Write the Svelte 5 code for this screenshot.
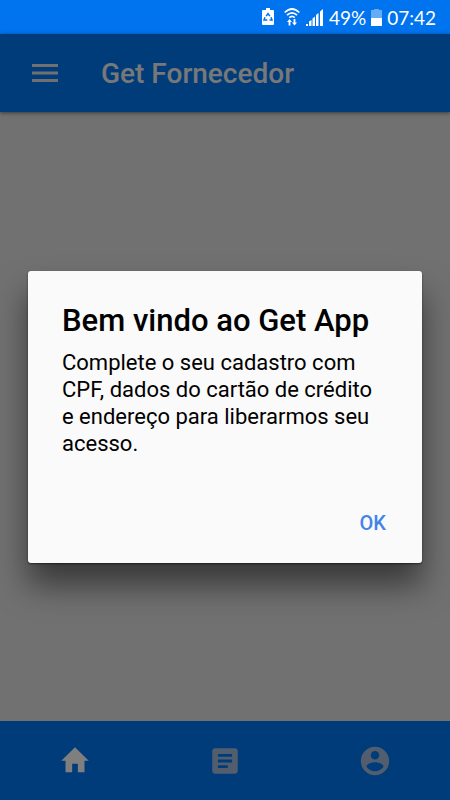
<script>
    let open = $state(true);

    const title = 'Get Fornecedor';

    const tabs = [
        { name: 'Início', active: true, path: 'M10 20v-6h4v6h4.700v-8.200h3L12 2.300 2.300 11.800h3V20z' },
        {
            name: 'Pedidos',
            active: false,
            path: 'M19 3H5c-1.100 0-2 .9-2 2v14c0 1.100.9 2 2 2h14c1.100 0 2-.9 2-2V5c0-1.100-.9-2-2-2zm-5 14H7v-2h7v2zm3-4H7v-2h10v2zm0-4H7V7h10v2z'
        },
        {
            name: 'Conta',
            active: false,
            path: 'M12 2C6.480 2 2 6.480 2 12s4.480 10 10 10 10-4.480 10-10S17.520 2 12 2zm0 3c1.660 0 3 1.340 3 3s-1.340 3-3 3-3-1.340-3-3 1.340-3 3-3zm0 14.200c-2.500 0-4.710-1.280-6-3.220.03-1.990 4-3.080 6-3.080 1.990 0 5.970 1.090 6 3.080-1.290 1.940-3.500 3.220-6 3.220z'
        }
    ];
</script>

<div class="screen">
    <div class="status">
        <svg class="saver" viewBox="0 0 12 18">
            <path fill="#fff" d="M4 0h4v2h3q1 0 1 1v13q0 1-1 1H1q-1 0-1-1V3q0-1 1-1h3z" />
            <path fill="none" stroke="#0073ef" stroke-width="1.500" d="M4.200 8.200 6 5.500l1.800 2.700M9 9.300l1 2.700H7.500M5.300 12H2l1-2.700" />
        </svg>
        <svg class="wifi" viewBox="0 0 16 18">
            <g fill="none" stroke="#fff" stroke-width="1.700">
                <path d="M.7 4.500Q8-2.500 15.300 4.500M3 7.200Q8 2.400 13 7.200M5.300 9.700Q8 7.200 10.700 9.700" />
            </g>
            <path fill="#fff" d="M5.500 11 8 14H6.400v3.500H4.600V14H3zM10.500 17.500 8 14.500h1.600V11h1.800v3.500H13z" />
        </svg>
        <svg class="signal" viewBox="0 0 17 17">
            <path fill="#fff" d="M0 15h2v2H0zM3 12.500 5.500 11v6H3zM6.500 9.500 9 7.500V17H6.500zM10 6l2.500-2v13H10zM14 2.500 17 0v17h-3z" />
        </svg>
        <span class="percent">49%</span>
        <svg class="battery" viewBox="0 0 11 17">
            <path fill="#66abf6" d="M3 0h5v1h3v8H0V1h3z" />
            <path fill="#fff" d="M0 9h11v8H0z" />
        </svg>
        <span>07:42</span>
    </div>

    <header>
        <button class="menu" aria-label="Menu">
            <svg viewBox="0 0 26 18">
                <path fill="currentColor" d="M0 0h26v3H0zM0 7.500h26v3H0zM0 15h26v3H0z" />
            </svg>
        </button>
        <h1>{title}</h1>
    </header>

    <main></main>

    <nav>
        {#each tabs as tab (tab.name)}
            <button class="tab" class:active={tab.active} aria-label={tab.name}>
                <svg viewBox="0 0 24 24">
                    <path fill="currentColor" d={tab.path} />
                </svg>
            </button>
        {/each}
    </nav>

    {#if open}
        <div class="overlay">
            <div class="dialog" role="dialog" aria-modal="true" aria-labelledby="dialog-title">
                <h2 id="dialog-title">Bem vindo ao Get App</h2>
                <p>Complete o seu cadastro com CPF, dados do cartão de crédito e endereço para liberarmos seu acesso.</p>
                <button class="ok" onclick={() => (open = false)}>OK</button>
            </div>
        </div>
    {/if}
</div>

<style>
    :global(body) {
        margin: 0;
        font-family: Roboto, sans-serif;
    }

    .screen {
        position: relative;
        display: flex;
        flex-direction: column;
        min-height: 100vh;
        background: #e2e2e2;
    }

    button {
        padding: 0;
        border: 0;
        background: none;
        font-family: inherit;
        cursor: pointer;
    }

    svg {
        display: block;
    }

    .status {
        display: flex;
        align-items: center;
        justify-content: flex-end;
        height: 34px;
        padding-right: 14px;
        background: #0073ef;
        color: #fff;
        font-family: Lato, sans-serif;
        font-size: 19px;
    }

    .saver {
        width: 12px;
        height: 18px;
        margin-right: 10px;
    }

    .wifi {
        width: 16px;
        height: 18px;
        margin-right: 6px;
    }

    .signal {
        width: 17px;
        height: 17px;
        margin-right: 6px;
    }

    .percent {
        margin-right: 5px;
    }

    .battery {
        width: 11px;
        height: 17px;
        margin-right: 5px;
    }

    header {
        display: flex;
        align-items: center;
        height: 78px;
        background: #0076f4;
        box-shadow: 0 1px 4px rgba(0, 0, 0, .5);
        color: #f0f0f0;
    }

    .menu {
        margin: 0 43px 0 32px;
        color: #e0e0e0;
    }

    .menu svg {
        width: 26px;
        height: 18px;
    }

    h1 {
        margin: 0;
        font-size: 28px;
        font-weight: 500;
    }

    main {
        flex: 1;
    }

    nav {
        display: flex;
        height: 79px;
        background: #0076f4;
    }

    .tab {
        flex: 1;
        display: flex;
        align-items: center;
        justify-content: center;
        color: #a4bcda;
    }

    .tab svg {
        width: 34px;
        height: 34px;
    }

    .active {
        color: #fff;
    }

    .overlay {
        position: absolute;
        inset: 34px 0 0;
        display: flex;
        align-items: center;
        padding: 0 28px;
        background: rgba(0, 0, 0, .5);
    }

    .dialog {
        display: flex;
        flex-direction: column;
        flex: 1;
        padding: 32px 34px 24px;
        border-radius: 3px;
        background: #fafafa;
        box-shadow: 0 22px 32px rgba(0, 0, 0, .5), 0 1px 2px rgba(0, 0, 0, .5);
        color: #000;
    }

    h2 {
        margin: 0 0 10px;
        font-size: 31px;
        font-weight: 500;
        line-height: 36px;
    }

    p {
        margin: 0 8px 50px 0;
        font-size: 22px;
        line-height: 27px;
    }

    .ok {
        align-self: flex-end;
        padding: 4px 2px;
        color: #4285e8;
        font-size: 20px;
        font-weight: 500;
        line-height: 24px;
    }
</style>
